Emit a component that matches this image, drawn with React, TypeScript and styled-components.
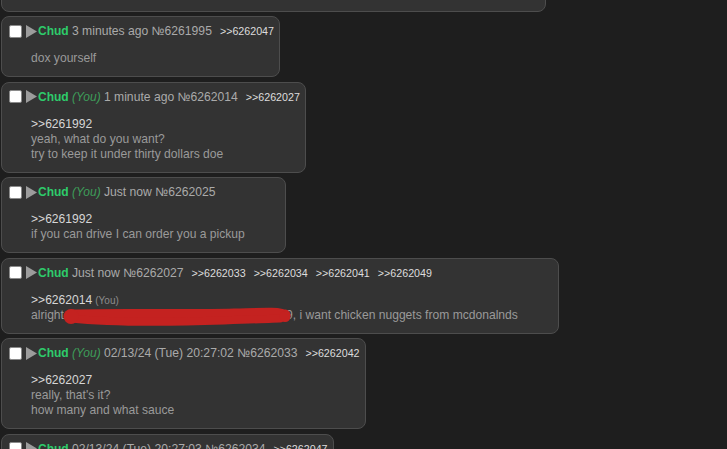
import React from 'react';
import styled, { createGlobalStyle } from 'styled-components';

const Global = createGlobalStyle`
  html, body { margin: 0; padding: 0; background: #1e1e1e; }
  body { font-family: "Liberation Sans", Arial, sans-serif; font-size: 12px; overflow: hidden; }
`;

const Thread = styled.main`
  display: flex;
  flex-direction: column;
  align-items: flex-start;
  gap: 4.5px;
  padding-left: 1px;
  height: 449px;
  overflow: hidden;
`;

const Post = styled.article<{ $w?: number; $offset?: number }>`
  box-sizing: border-box;
  flex-shrink: 0;
  background: #333333;
  border: 1px solid #4d4d4d;
  border-radius: 8px;
  padding: 6px 5px 10px 7px;
  ${(p) => (p.$w ? `width: ${p.$w}px;` : '')}
  ${(p) => (p.$offset ? `margin-top: ${p.$offset}px;` : '')}
`;

const Header = styled.div`
  display: flex;
  align-items: center;
  height: 16px;
  line-height: 16px;
  white-space: nowrap;
  color: #aaaaaa;
`;

const Check = styled.input.attrs({ type: 'checkbox' })`
  appearance: none;
  box-sizing: border-box;
  width: 13px;
  height: 13px;
  margin: 0;
  background: #ffffff;
  border: 1px solid #8a8a8a;
  border-radius: 2px;
`;

const Arrow = styled.svg`
  width: 11px;
  height: 13px;
  margin-left: 4px;
  flex-shrink: 0;
`;

const Name = styled.span`
  margin-left: 1px;
  font-weight: bold;
  color: #2ecc6b;
`;

const You = styled.span`
  margin-left: 3.3px;
  font-style: italic;
  color: #3e9e5a;
`;

const Meta = styled.span`
  margin-left: 3.3px;
  font-size: 12.15px;
  color: #aaaaaa;
`;

const Backlink = styled.a`
  margin-left: 8px;
  font-size: 10.7px;
  color: #dddddd;
  text-decoration: none;
`;

const Body = styled.blockquote`
  margin: 12px 35px 0 22px;
  font-size: 12.1px;
  color: #9a9a9a;
  line-height: 15px;
  white-space: nowrap;
`;

const Line = styled.div``;

const Quote = styled.a`
  color: #d6d6d6;
  text-decoration: none;
`;

const QuoteYou = styled.span`
  margin-left: 3px;
  font-size: 10px;
  color: #8c8c8c;
`;

const Redacted = styled.span`
  display: inline-block;
  width: 222px;
  height: 15px;
  vertical-align: top;
  position: relative;
  z-index: 1;
`;

const Scribble = styled.svg`
  position: absolute;
  left: 0;
  top: 0;
  overflow: visible;
`;

type PostData = {
  you?: boolean;
  meta: string;
  backlinks: string[];
  quote?: string;
  quoteYou?: boolean;
  lines: React.ReactNode[];
};

const posts: PostData[] = [
  {
    meta: '3 minutes ago №6261995',
    backlinks: ['6262047'],
    lines: ['dox yourself'],
  },
  {
    you: true,
    meta: '1 minute ago №6262014',
    backlinks: ['6262027'],
    quote: '6261992',
    lines: ['yeah, what do you want?', 'try to keep it under thirty dollars doe'],
  },
  {
    you: true,
    meta: 'Just now №6262025',
    backlinks: [],
    quote: '6261992',
    lines: ['if you can drive I can order you a pickup'],
  },
  {
    meta: 'Just now №6262027',
    backlinks: ['6262033', '6262034', '6262041', '6262049'],
    quote: '6262014',
    quoteYou: true,
    lines: [
      <>
        alright
        <Redacted>
          <Scribble width="222" height="15" viewBox="0 0 222 15">
            <g fill="none" stroke="#c42220" strokeLinecap="round">
              <path d="M7 7 C 60 5.5, 120 7.5, 170 6 S 212 5.5, 221 7" strokeWidth="11" />
              <path d="M7 10.5 C 40 14, 100 14.5, 160 12.5 S 205 10.5, 216 10.5" strokeWidth="8" />
            </g>
            <circle cx="7" cy="8.5" r="7.5" fill="#c42220" />
            <circle cx="221" cy="8.5" r="5.5" fill="#c42220" />
          </Scribble>
        </Redacted>
        9, i want chicken nuggets from mcdonalnds
      </>,
    ],
  },
  {
    you: true,
    meta: '02/13/24 (Tue) 20:27:02 №6262033',
    backlinks: ['6262042'],
    quote: '6262027',
    lines: ["really, that's it?", 'how many and what sauce'],
  },
  {
    meta: '02/13/24 (Tue) 20:27:03 №6262034',
    backlinks: ['6262047'],
    quote: '6262033',
    lines: ['like 20 and sweet n sour'],
  },
];

function PostView({ data, w, offset }: { data: PostData; w?: number; offset?: number }) {
  return (
    <Post $w={w} $offset={offset}>
      <Header>
        <Check />
        <Arrow viewBox="0 0 11 13">
          <polygon points="0,0 11,6.5 0,13" fill="#9c9c9c" />
        </Arrow>
        <Name>Chud</Name>
        {data.you && <You>(You)</You>}
        <Meta>{data.meta}</Meta>
        {data.backlinks.map((b) => (
          <Backlink key={b} href={`#p${b}`}>&gt;&gt;{b}</Backlink>
        ))}
      </Header>
      <Body>
        {data.quote && (
          <Line>
            <Quote href={`#p${data.quote}`}>&gt;&gt;{data.quote}</Quote>
            {data.quoteYou && <QuoteYou>(You)</QuoteYou>}
          </Line>
        )}
        {data.lines.map((l, i) => (
          <Line key={i}>{l}</Line>
        ))}
      </Body>
    </Post>
  );
}

export default function App() {
  return (
    <>
      <Global />
      <Thread>
        <PostView
          data={{ meta: 'Just now №6261992', backlinks: [], lines: ['anyone in town'] }}
          w={545}
          offset={-49.5}
        />
        {posts.map((p, i) => (
          <PostView key={i} data={p} />
        ))}
      </Thread>
    </>
  );
}
